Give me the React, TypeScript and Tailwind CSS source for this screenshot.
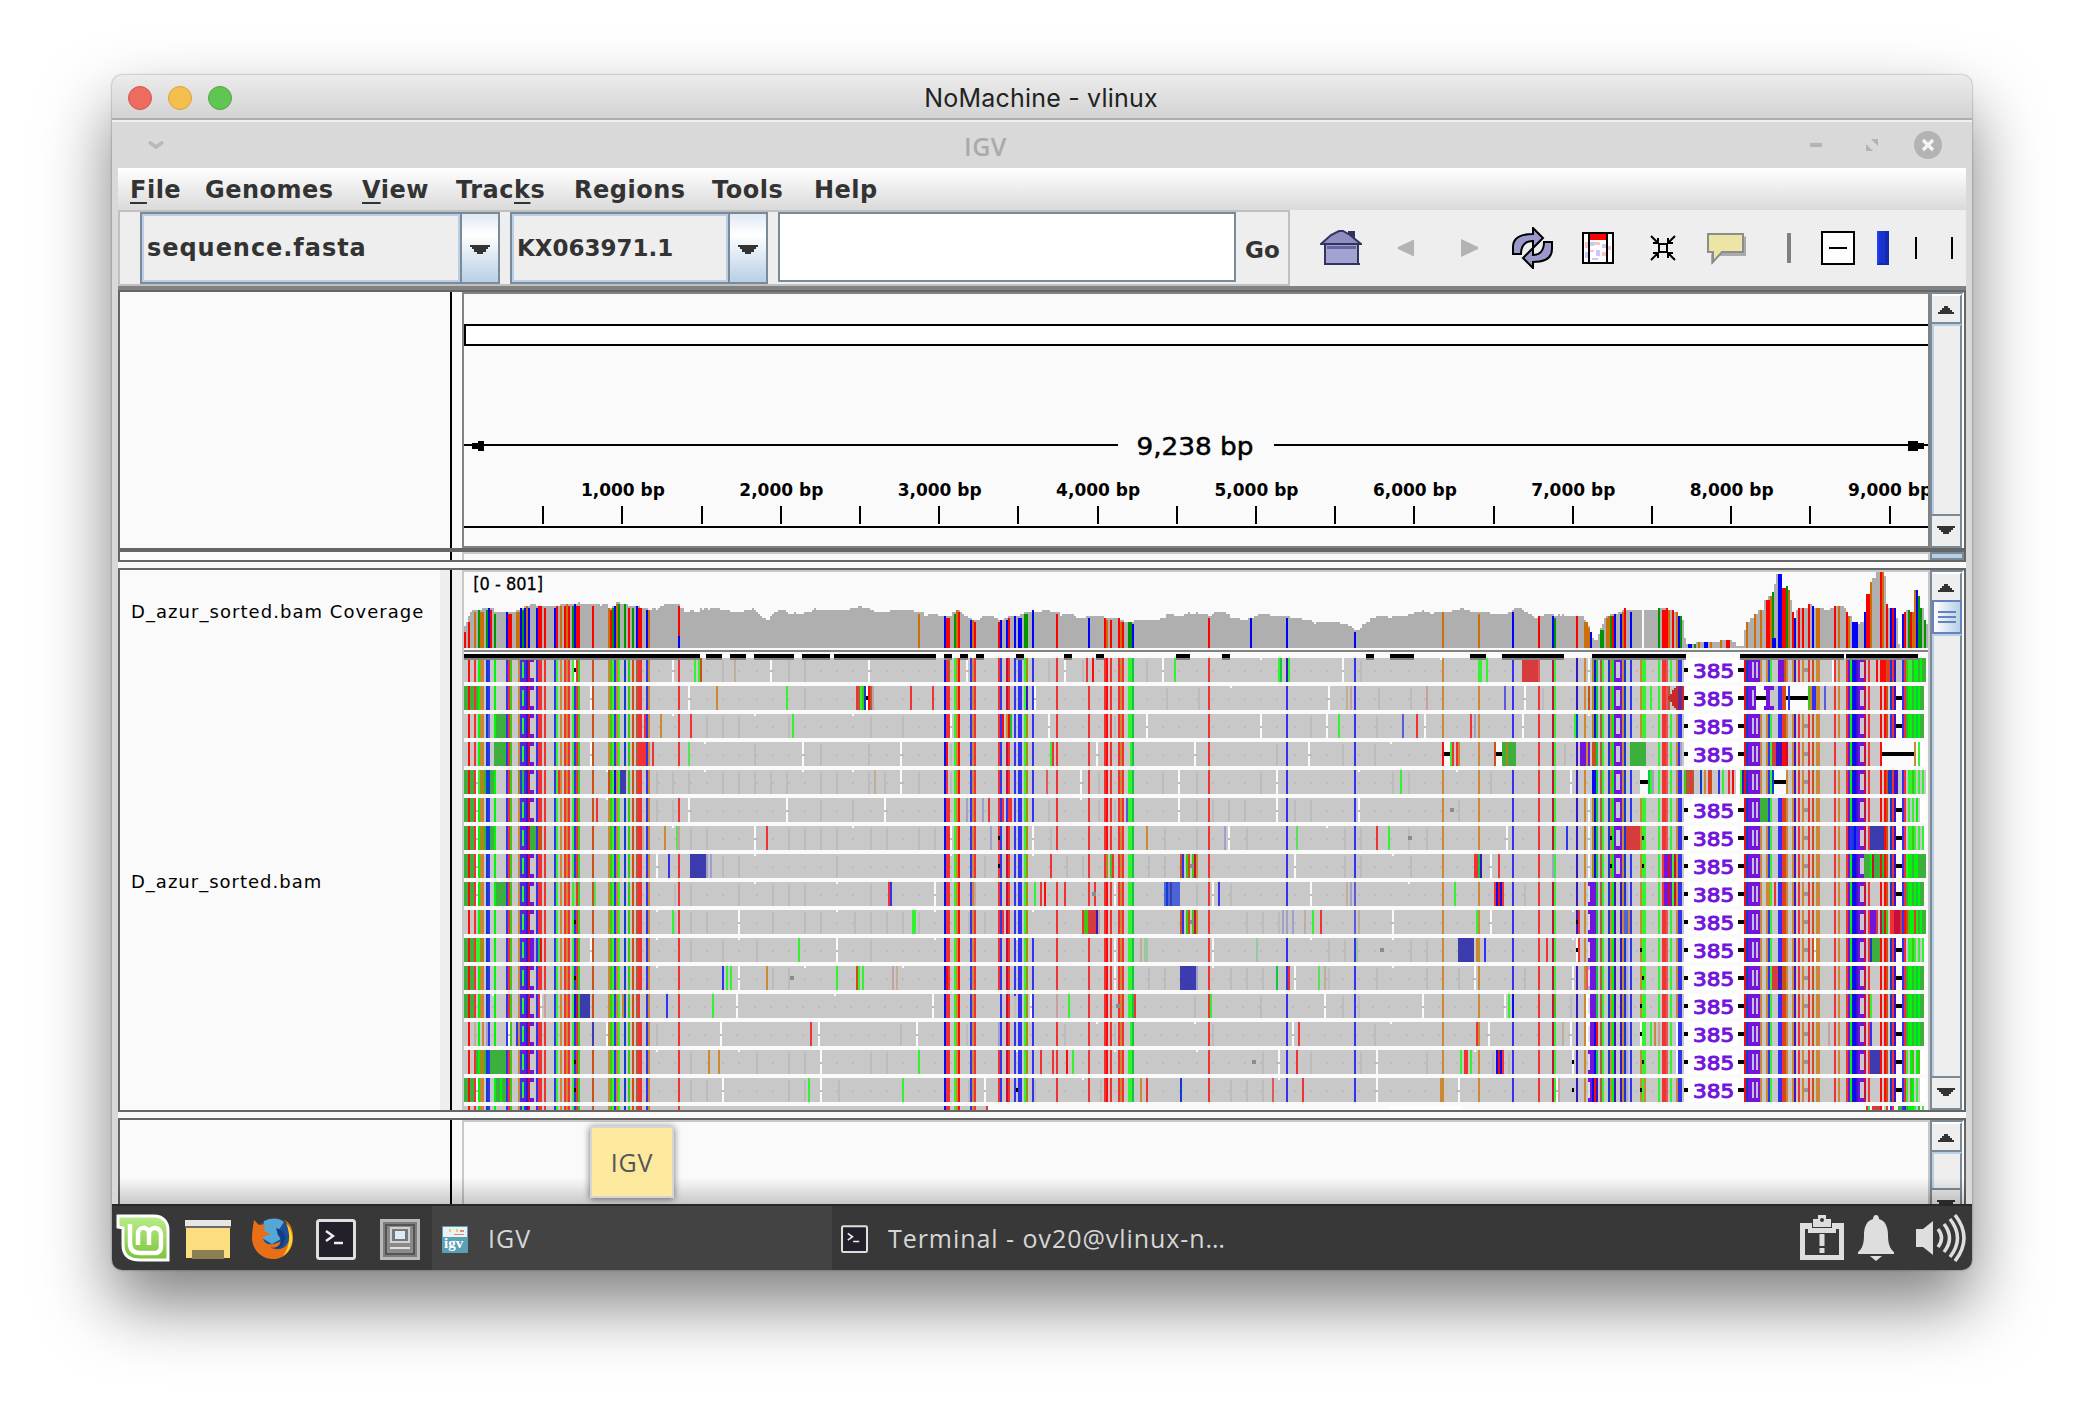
import React from "react";

const COLORS: Record<string, string> = {
  r: "#f23232", b: "#3232f2", g: "#32f232", o: "#cc8833",
  R: "#ff0a0a", B: "#0a0af5", G: "#00f50a", O: "#cc5014",
  k: "#c80f3c", n: "#0f3cd2", e: "#3cc814", f: "#0fc83c",
  y: "#aa8c14", p: "#7314dc", q: "#3c14c8", W: "#ffffff",
  N: "#3c3caf", D: "#d73c3c", E: "#3caf3c", l: "#a0a0c8",
  t: "#beaf9b", h: "#c8a0a0", m: "#b45a3c", c: "#9bc89b",
  a: "#c8c8c8", i: "#5a5adc", j: "#5ae15a", u: "#e15a5a",
  M: "#4b64d7", s: "#b4a5d7",
};

const COMMON_BARS =
  "2R 5r 7G 8o2 11n 12b 15G 21b 22r 23e 27o 28b 29g 30b 31q 32k 36b 37r2 40r 45b 46g 48o 50r 51o 52r 54g 55b 56r 57e 64O " +
  "72o 73e 74g 75b 76o 77g 80n 82e 84O 86m 87r2 91b 92o 107r " +
  "240B 241r2 245g 246o 247R 253b 254o 255r 267r 268b 271k 272r 275b 277b2 280g 281y 284b 296r 312r 320r 321R 323r 327r 328o 329r 332g2 334f 372r 411b 445b " +
  "489o 507o 524b 537r 544k 545g 556q 560o 564y 565B 566f 568m 569g 572n 573o 574G 575q 578q 579o 580n 583b 588o 589g 590g 597g 599r2 601u 603g 606o 607b2 " +
  "640R 641n 642p6 648o 651o 652b 653g 657b2 659r2 660O 661o 664o 665q 667r 669o 672r 674O 676o2 685r 687o 691r 692p 693G 694B2 696q 697p2 700k 702r 708R 710R 711O 713n 714r 715q 719b 720r";

const LATE_READ = "562p3 565p ";
const STRIPES = "721a 722g2 724e 725g 726a 727g 728a 729g";
const BLOCK = "721E 722G2 724E 725G 726f 727G 728E2";

const ROWS: string[] = [
  "55w 55K 104w 115g 117g 118O 129z 135t 153w 162z 170z 202w 242O 251w 292z 300w 309z 311r 312a 314R 341z 349w 355g 398v 407g 408f 411q 412g 439w 448z 488v 507g2 511g 529D8 537u 562w 657p3 684W 706R 709R 712r 721e 722g2 724E 725G2 727E 728G 729E2",
  "0E2 3E2 6E 63w 112w 126o 161g 170z 196r 197m 198g 199e 200n 201w 201K 202R 203m 204h 223r 234r 281q 285w 351z 367z 383v 432w 441t 443h 457z 473z 481h 520i 530w 539z 562O 593g 602m 603D5 606m 646X5 651p2 653a 661X11 662b 672e 673o 674b2 680i 716X3 " + BLOCK,
  "12i 16E5 90r 98o 104v 113r 121z 129z 137z 145v 162z 164g 194v 203z 219z 243w 269R 271o 272R 273f 292w 325z 341w 398w 423z 431w 437g 456z 469i 476r 480w 503r 505l 529w 555g 556n 562v 583b 713b 716X3 " + BLOCK,
  "15E6 89r2 94r 112j 120v 63w 145z 169w 178z 202z 218w 242a 243z 241R 293g 294r 316w 332a 365w 406z 422w 439z 455z 463v 489R 490X3 493g 494r 496r 497o 515O 516X3 519E2 521y 522E4 550z 558p5 561o 564O2 580n 583E6 589E2 608l 654D2 656q3 659R2 661k 687a 708R 709X16 725o 726W 727g 728W3",
  "0E2 3E2 6w 7g 8y2 10E 11n2 13E2 27y 29f 47r 71v 72O 75B 78N3 96z 104z 107a 112z 120v 129z 137z 145z 153z 161z 169v 178z 186z 194v 202z 205t 210z 218w 227z 242a 243z 291u 308w 317z 349z 357w 366z 398z 406w 447v 464z 468g 472z 496v 513z 544k 553w 588X4 592f 593g 594l 564B 610e 611m2 613r 614m 615a3 618n 619a 620o 622r 623O 625a 627b 628a 629g 630a2 632r 634R 635a 636W2 638g 639q 654n 655X6 708R 712n 716q " + STRIPES,
  "0E2 3E2 6w 66r 71v 96z 104z 112w 161w 178z 194z 210w 251l 259l 262r 269r 271b 272r2 292z 308v 317z 325z 331i 357w 366z 374z 382z 390z 406w 415z 423z 447w 493x 497z 562w 648E4 716X3 721a 722g 723a 724g 725a 726G 727a 728W3",
  "0E2 3E2 6w 8y2 10E 11n2 13E2 33E3 37O2 89t 100o 104v 106j 107h 113z 121z 145w 151r 162z 170z 178z 186z 194v 203z 211z 227z 235z 243w 263l 267K 284w 293z 341o 350z 366z 380l 382w 391z 416j 431v 440z 448z 456r 462g 472z 472x 481z 521w 551b 562w 581D7 573K 589K 692q 693b 694n 696b 703N5 708N2 716X3 " + STRIPES,
  "0E2 3E2 6w 96w 102b 113N8 121l 123l 129z 137z 145v 186z 243v 260z 267K 284a 284v 293r 296a 301z 309z 321y 323e 324r 342z 350z 358O 359b 361e 362O 364e 365k 366o 363x 415w 440z 448z 464v 473z 505r2 507f 508q 513w 517r 544l 562w 573K 589K 600p2 602k 603p 604g 605k 700E3 703G 704k 705E3 708R 709f 716X3 721g 722G2 724E 725G2 727E4",
  "0E2 3E2 6w 16E5 55c 65j 105z 113z 137z 145v 154z 162z 170z 186v 203z 212r 213b 235w 255h 284a 285g 288r 290R 300r 315r 314x 325w 350M8 351n 353N 366z 374w 377b 383z 423w 441t 443l 445i 472v 495g 515r 516B 517R 518B 519r 530z 600p2 602k 603p 604g 605k 652o 655r 716X3 " + LATE_READ + BLOCK,
  "55K 96v 104g 105z 113z 121z 137w 154z 170z 178z 186v 195z 203z 211z 219z 224g2 227z 235v 252z 260z 269r 284a 284v 309r 310e2 312D4 316q 317h 358O 359b 361e 362O 364e 365k 366o 363x 391z 399z 407z 409l 411l 414l 420t 424g 428r 445i 447t 464w 506g 513w 554v 556K 557r 580M2 582o 703p3 706D 708k 709f 711e 713r 715k 716k2 718D 720R 721O 722e 723G2 725r 726G 727E 728G 729E2 " + LATE_READ,
  "0E2 3E2 6g 7g 8y2 33p3 35s 37f 38R 63w 96v 113z 129z 137v 146z 167g 186w 203z 235v 276v 325w 338t 340c2 374w 396c 423v 432z 440z 446c 458x 464v 473z 481z 497N8 506o2 510b 541r 554v 556w 556K 557r 588K 675w 703n 704E4 716X3 " + LATE_READ + STRIPES,
  "0E2 3E2 55K 96v 129b 131g 133g 137w 151o 154z 162z 163x 170v 186g 196O 197g 199g 214h 216t 219v 241R 284b 325w 342z 350z 358N8 366l 374v 383z 391z 399z 406f 412r 415w 427j 430t 432z 456z 464v 481z 497z 505w 530z 554w 561u 654D3 657q2 659O 716X3 589K 562s 563p2 565p " + BLOCK,
  "0E2 3E2 14v 37r 38w 40h 55B 56k 58N5 79o 88a 101b 124g 136w 185v 234w 267a 275z 283w 296h 302g 326x 335r 365z 373g 398z 430w 439z 447z 479w 520w 522g 524B 545e 553z 561W2 563p3 588K 703g 716X3 " + BLOCK,
  "5t 8a 11l 22w 26b 64N 71w 96z 128w 173r 177w 218z 226w 251z 267l 300z 316v 325z 332a 365v 374z 414w 417r 455z 463v 506r 512w 549t 553w 561W2 563p2 565B 566R 588w 588K 591a 593g 595o 597h 606W 682h 703b 716X3 " + BLOCK,
  "6E 8y2 10E 13E8 55K 96v 113z 122o 127o 137v 146z 162z 170z 178w 203z 211z 227g 276v 288r 294r 301R 304g 325v 366v 394x 399z 407w 416r 423z 448z 456w 481z 498g 500r2 503g 505v 514z 516B 517R 518B 519r 522z 554w 554K 562p3 589K 606W 703N5 716X3 721g 722a 723G 724e 725a 726G 727e 728W3",
  "0E2 3E2 6w 16E5 18G 55K 113z 121z 129w 162z 170z 172g 178w 187z 219g 252z 260w 276K 285z 309v 318z 338o 341r 358n 383z 391z 399z 404u 407v 419r 456w 488o2 497w 546w 547h 554K 562p2 564B 565R 566q 588K 590o 716X3 721g 722a 723e 724G 725a 726g 727a 728W3",
];

const COVERAGE: number[][] = [
  [0,11],[1,13],[2,16],[3,18],[4,19],[9,20],[13,20],[15,18],[21,18],[26,19],[28,20],[30,21],[33,22],[36,21],[44,21],[48,22],[57,23],[58,22],[68,21],[69,22],[72,20],[74,21],[76,23],[78,22],[82,21],[86,21],[88,20],[92,19],[94,20],[96,19],[97,20],[98,21],[100,22],[108,20],[110,18],[113,19],[115,18],[118,20],[119,19],[120,20],[122,19],[123,20],[128,19],[133,18],[140,19],[144,20],[145,19],[146,18],[147,17],[148,16],[149,15],[151,14],[153,16],[154,17],[155,18],[157,19],[161,18],[162,17],[165,18],[166,17],[170,18],[174,19],[175,20],[176,19],[193,20],[197,21],[199,20],[203,19],[205,18],[213,19],[225,18],[228,18],[230,16],[232,17],[237,16],[244,18],[246,19],[248,18],[249,17],[250,16],[252,15],[254,14],[258,15],[259,16],[265,15],[267,14],[270,15],[272,16],[278,17],[280,18],[284,19],[285,18],[289,19],[293,18],[298,16],[299,17],[303,17],[305,16],[306,15],[311,16],[319,16],[320,15],[324,15],[328,14],[330,13],[335,14],[345,14],[348,15],[351,17],[355,16],[360,17],[362,18],[363,17],[366,18],[367,17],[368,17],[372,16],[374,17],[375,18],[381,17],[383,15],[388,14],[392,15],[395,16],[397,17],[403,16],[409,16],[413,15],[419,14],[424,13],[425,12],[426,13],[435,13],[438,12],[442,11],[444,10],[445,9],[448,10],[449,12],[451,13],[453,15],[456,16],[462,15],[464,16],[468,16],[472,17],[475,18],[479,19],[480,18],[483,17],[485,18],[492,18],[494,19],[498,20],[500,19],[503,18],[513,17],[520,17],[522,18],[524,19],[525,20],[529,19],[530,18],[532,17],[534,16],[535,15],[537,16],[540,17],[545,16],[547,17],[548,16],[549,17],[550,16],[558,16],[560,14],[561,11],[563,8],[564,5],[565,4],[567,7],[568,10],[569,12],[570,15],[571,16],[573,17],[577,18],[579,19],[580,20],[581,19],[584,19],[587,19],[597,20],[602,19],[605,18],[607,16],[609,14],[610,5],[611,2],[616,3],[628,4],[634,3],[636,1],[640,9],[641,13],[643,15],[645,17],[647,19],[649,19],[650,24],[652,26],[654,28],[655,32],[656,37],[658,36],[659,30],[661,31],[662,29],[663,24],[664,18],[665,15],[666,19],[667,20],[672,22],[674,21],[675,20],[680,19],[683,20],[685,21],[690,20],[691,18],[692,16],[694,13],[697,12],[698,13],[700,18],[701,27],[703,33],[704,35],[706,38],[710,36],[711,22],[712,20],[715,20],[716,15],[717,2],[718,0],[719,17],[720,18],[721,19],[723,18],[725,29],[727,26],[728,20],[730,14],[731,12],[732,0],
];

const COVERAGE_BARS =
  "0r 2r 5o 7G 8o2 11G 12b 13r 15G 21b 22r2 26o2 28b 29G 30b 31o 32b 36b 37r2 40r 45b 46r 48o 50r 51o 52r 54G 55b 56r2 64r 72o 73r 74G 75b 76o 77G 80G 82r 84G 86b 87r2 91b 92o 107r 227o " +
  "240b 241r2 245G 246o 247r 253b 254o 255r 267r 268b 271b 272r 275b 277b2 280G2 284b 296r 312b 320r 321o 323r 327r 328o 329r 332G2 334b 372r 393b 411b 445b " +
  "489o 507o 524b 537r 544b 545G 556r 560o2 562o 563b 568G2 571o 572o 573G 574r 575b 578b 579o 580r 583b 589w 597G 599r2 601r 602o 604r 606o 607b 608G 612b2 615G 617o 620b2 623o 628o 631r2 " +
  "641o 645o 648o 651r2 653o 654G 657b2 659r2 661G 662o 664r 665b 667r 669r 672r 674b 676o2 685r 687o 691r 692o 694b2 696b 700b 701r 702r 703o 708r 709o 711r 713b 714r 715b 719b 720r 722G 723r 724o 725o 726b 727G 728G 730G";

const COVERAGE_COLORS: Record<string, string> = { r: "#ff0000", b: "#0000ff", G: "#009600", o: "#cc6e0a", w: "#fafafa" };

const FEATURES: number[][] = [
  [0,118],[121,8],[133,8],[145,20],[169,14],[185,51],[240,4],[248,4],[256,4],[276,4],[300,4],[316,4],[356,7],[379,4],[451,4],[463,12],[503,8],[519,31],[564,47],[638,52],[691,36],
];

type Bar = { at: number; kind: string; len: number };

function parse(spec: string): Bar[] {
  return [...spec.matchAll(/(\d+)([a-zA-Z])(\d*)/g)].map((m) => ({
    at: Number(m[1]), kind: m[2], len: m[3] ? Number(m[3]) : 1,
  }));
}

function BarMark({ bar, y }: { bar: Bar; y: number }) {
  const { at, kind, len } = bar;
  if (kind === "z") return <rect x={at} y={y + 1} width={1} height={11} fill="#bcbcbc" />;
  if (kind === "v") return <rect x={at} y={y} width={1} height={1} fill="#fafafa" />;
  if (kind === "K") return <rect x={at} y={y + 5} width={1} height={2} fill="#000" />;
  if (kind === "x") return <rect x={at} y={y + 5} width={2} height={2} fill="#8c8c8c" />;
  if (kind === "w")
    return (
      <>
        <rect x={at} y={y} width={1} height={12} fill="#fafafa" />
        <rect x={at} y={y + 6} width={1} height={1} fill="#bcbcbc" />
      </>
    );
  if (kind === "X")
    return (
      <>
        <rect x={at} y={y} width={len} height={12} fill="#fafafa" />
        <rect x={at} y={y + 5} width={len} height={2} fill="#000" />
      </>
    );
  return <rect x={at} y={y} width={len} height={12} fill={COLORS[kind]} />;
}

const COMMON = parse(COMMON_BARS);

function ReadRow({ spec, index }: { spec: string; index: number }) {
  const y = 43 + index * 14;
  const dots = Array.from({ length: 75 }, (_, k) => Math.round(7 + k * 8.15 - (index > 11 && index < 14 ? 1 : 0)));
  const spliced = index !== 4;
  const upper = index < 8;
  return (
    <g>
      <rect x={0} y={y} width={spliced ? 610 : 730} height={12} fill="#c8c8c8" />
      <rect x={640} y={y} width={[0, 4, 7, 9].includes(index) ? 91 : 90} height={12} fill="#c8c8c8" />
      {dots.map((d) => d < 608 && <rect key={d} x={d} y={y + 6} width={1} height={1} fill="#bcbcbc" />)}
      {COMMON.map((b, i) => <BarMark key={i} bar={b} y={y} />)}
      {[29, 33].map((x) => (
        <React.Fragment key={x}>
          <rect x={x} y={y} width={2} height={2} fill={COLORS.p} />
          <rect x={x} y={y + 10} width={2} height={2} fill={COLORS.p} />
        </React.Fragment>
      ))}
      {upper && (
        <>
          <rect x={575} y={y} width={4} height={12} fill={COLORS.p} />
          <rect x={576} y={y + 2} width={2} height={8} fill="#c8c8dc" />
        </>
      )}
      {!upper && <rect x={581} y={y} width={1} height={12} fill={COLORS.s} />}
      <rect x={644} y={y + 2} width={1} height={8} fill="#c8bedc" />
      <rect x={646} y={y + 2} width={1} height={8} fill="#c8bedc" />
      <rect x={697} y={y} width={3} height={12} fill={COLORS.p} />
      <rect x={698} y={y + 2} width={2} height={8} fill="#c8c8d2" />
      <rect x={670} y={y + 5} width={2} height={2} fill="#969696" />
      {parse(spec).map((b, i) => <BarMark key={i} bar={b} y={y} />)}
      {index === 1 && (
        <>
          <rect x={603} y={y} width={4} height={12} fill="#c8c8c8" />
          <path d={`M601 ${y + 6}h1v-1h1v-1h1v-2h1v-1h1v-1h4v12h-4v-1h-1v-1h-1v-2h-1v-1h-1v-1z`} fill="#c82a28" />
          <rect x={607} y={y} width={2} height={12} fill="#6a2890" />
          <rect x={650} y={y} width={5} height={2} fill={COLORS.p} />
          <rect x={650} y={y + 10} width={5} height={2} fill={COLORS.p} />
        </>
      )}
      {!upper && <rect x={562} y={y + 2} width={1} height={8} fill="#e1dcf0" />}
      {spliced && (
        <>
          <rect x={610} y={y + 5} width={2} height={2} fill="#000" />
          <rect x={612} y={y} width={25} height={12} fill="#fff" />
          <rect x={637} y={y + 5} width={3} height={2} fill="#000" />
          <text x={614.5} y={y + 9.8} fontSize={9.6} fontWeight={400} stroke={COLORS.p} strokeWidth={0.5} textLength={20.6} lengthAdjust="spacingAndGlyphs" fill={COLORS.p}>385</text>
        </>
      )}
    </g>
  );
}

function coverageAt(c: number) {
  let h = 0;
  for (const [x, v] of COVERAGE) if (x <= c) h = v;
  return h;
}

function AlignmentChart() {
  let path = "M0 38";
  COVERAGE.forEach(([x, h]) => { path += `H${x}V${38 - h}`; });
  return (
    <svg className="block" width={1464} height={538} viewBox="0 0 732 269" shapeRendering="crispEdges" fontFamily="'DejaVu Sans'">
      <rect width={732} height={269} fill="#fafafa" />
      <path d={path + "V38Z"} fill="#afafaf" />
      {parse(COVERAGE_BARS).map((b, i) => {
        const h = b.at === 0 ? 8 : b.at === 2 ? 13 : Math.max(1, coverageAt(b.at) - (b.kind === "w" || b.at > 600 || i % 3 === 0 ? 0 : 1));
        return <rect key={i} x={b.at} y={38 - h} width={b.len} height={h} fill={COVERAGE_COLORS[b.kind]} />;
      })}
      <rect x={107} y={32} width={1} height={6} fill="#00f" />
      <rect x={654} y={33} width={2} height={5} fill="#00f" />
      <text x={4.6} y={9} fontSize={8.6} stroke="#000" strokeWidth={0.15} textLength={35} lengthAdjust="spacingAndGlyphs">[0 - 801]</text>
      <rect x={0} y={39} width={732} height={1} fill="#828282" />
      {ROWS.map((spec, i) => <ReadRow key={i} spec={spec} index={i} />)}
      {FEATURES.map(([x, w]) => (
        <React.Fragment key={x}>
          <rect x={x} y={41} width={w} height={2} fill="#000" />
          <rect x={x} y={43} width={w} height={1} fill="#828282" />
        </React.Fragment>
      ))}
      <rect x={0} y={267} width={262} height={2} fill="#c8c8c8" />
      {COMMON.filter((b) => b.at < 262).map((b, i) => (
        <rect key={i} x={b.at} y={267} width={b.len} height={2} fill={COLORS[b.kind]} />
      ))}
      <rect x={261} y={267} width={1} height={2} fill={COLORS.D} />
      <rect x={463} y={267} width={36} height={2} fill="#fff" />
      {parse("701r 702g 704D5 708R 710a 711O 713b 714r 717E2 719b 720n 721E 722G3 725g 726a 727E 729g").map((b, i) => (
        <rect key={i} x={b.at} y={267} width={b.len} height={2} fill={COLORS[b.kind]} />
      ))}
    </svg>
  );
}

function Ruler() {
  return (
    <svg className="block" width={1464} height={252} viewBox="0 0 1464 252" fontFamily="'DejaVu Sans'" shapeRendering="crispEdges">
      <rect width={1464} height={252} fill="#fafafa" />
      <path d="M1466 31H1V51H1466" fill="#fff" stroke="#000" strokeWidth={2} />
      <path d="M0 150h654v2H0zM810 150h654v2H810z" />
      <path d="M8 149h6v-2h6v10h-6v-2H8zM1460 149h-6v-2h-10v10h10v-2h6z" />
      <text x={731} y={161} fontSize={24} textAnchor="middle" textLength={117} lengthAdjust="spacingAndGlyphs" stroke="#000" strokeWidth={0.5}>9,238 bp</text>
      {Array.from({ length: 18 }, (_, i) => (
        <rect key={i} x={Math.round((i + 1) * 79.2 - 1)} y={212} width={2} height={18} />
      ))}
      {Array.from({ length: 9 }, (_, i) => (
        <text key={i} x={(i + 1) * 158.4 + 0.5} y={201.5} fontSize={18.5} fontWeight={700} textAnchor="middle" textLength={84} lengthAdjust="spacingAndGlyphs">{i + 1},000 bp</text>
      ))}
      <rect x={0} y={232} width={1464} height={2} />
    </svg>
  );
}

function Arrow({ up = false, wide = 18 }: { up?: boolean; wide?: number }) {
  return (
    <svg width={wide} height={wide / 2} viewBox="0 0 18 9" shapeRendering="crispEdges">
      <path d={up ? "M7 1h4v2h2v2h2v2h2v2H1V7h2V5h2V3h2z" : "M0 0h18v2h-2v2h-2v2h-2v2H6V6H4V4H2V2H0z"} fill="#333" />
    </svg>
  );
}

function ScrollBar({ thumb = false }: { thumb?: boolean }) {
  return (
    <div className="flex w-[34px] shrink-0 flex-col border-x-2 border-t-2 border-l-[#7a8a99] border-r-white border-t-[#7a8a99] bg-[#eeeeee]">
      <div className="flex h-[30px] shrink-0 items-center justify-center border-r-2 border-b-2 border-t-2 border-t-white border-b-[#7a8a99] border-r-[#7a8a99]">
        <Arrow up />
      </div>
      {thumb && (
        <div className="-mt-0.5 flex h-[34px] shrink-0 flex-col items-center justify-center gap-[3px] border-2 border-[#6382bf] bg-gradient-to-r from-white to-[#b8cfe5]">
          <div className="h-0.5 w-[18px] bg-[#6382bf]" />
          <div className="h-0.5 w-[18px] bg-[#6382bf]" />
          <div className="h-0.5 w-[18px] bg-[#6382bf]" />
        </div>
      )}
      <div className="min-h-0 flex-1 border-t-2 border-l-2 border-r-2 border-t-[#b8cfe5] border-l-[#b8cfe5] border-r-[#7a8a99]" />
      <div className="flex h-[34px] shrink-0 items-center justify-center border-y-2 border-r-2 border-[#7a8a99] pb-0.5">
        <Arrow />
      </div>
    </div>
  );
}

function PanelRow({ className, name, children, bar, gutter = false, edge }: {
  className: string; name?: React.ReactNode; children?: React.ReactNode; bar?: React.ReactNode; gutter?: boolean; edge: string;
}) {
  return (
    <div className={"flex border-x-2 border-[#666666] bg-[#fafafa] " + className}>
      <div className="flex w-[330px] shrink-0">
        <div className="w-[320px]">{name}</div>
        <div className={gutter ? "w-[10px] bg-[#eeeeee]" : "w-[10px]"} />
      </div>
      <div className="w-0.5 shrink-0 bg-black" />
      <div className={gutter ? "w-[10px] shrink-0 bg-[#f0f0f0]" : "w-[10px] shrink-0"} />
      <div className={"w-[1468px] shrink-0 overflow-hidden border-x-2 border-t-2 " + edge}>{children}</div>
      {bar}
    </div>
  );
}

function Combo({ text, className }: { text: string; className: string }) {
  return (
    <div className={"flex h-[72px] border-2 border-[#7a8a99] font-bold text-[#333] " + className}>
      <div className="flex flex-1 items-center border-2 border-[#b8cfe5] pl-[3px]">{text}</div>
      <div className="flex w-[38px] items-center justify-center border-l-2 border-[#7a8a99] bg-gradient-to-b from-[#dfe9f4] via-white via-30% to-[#b8cfe5] pt-1">
        <Arrow wide={20} />
      </div>
    </div>
  );
}

function ToolIcons() {
  return (
    <div className="flex h-[76px] flex-1 items-center bg-[#eeeeee]">
      <svg className="ml-[30px]" width={42} height={36} viewBox="0 0 42 36">
        <path d="M5 14V34H38V14" fill="#a3a3d1" stroke="#33335f" strokeWidth={2} />
        <path d="M28 1h7v10h-7z" fill="#33335f" />
        <path d="M1 14L11 5 19 1h4l7 4 11 9z" fill="#8e8ec0" stroke="#33335f" strokeWidth={2} />
        <path d="M7 16h29v3H7z" fill="#6666a0" /><path d="M4 34h36" stroke="#33335f" strokeWidth={2} />
      </svg>
      <svg className="ml-[36px]" width={16} height={18} viewBox="0 0 17 18"><path d="M17 0v18L0 10V8z" fill="#b3b3b3" /></svg>
      <svg className="ml-[47px]" width={17} height={18} viewBox="0 0 17 18"><path d="M0 0v18l17-8V8z" fill="#b3b3b3" /></svg>
      <svg className="ml-[33px]" width={43} height={42} viewBox="0 0 43 42">
        <path d="M2 27V20C2 11 9 7 22 7V1L32 11 22 21V14C14 14 10 19 10 27z" fill="#9999cc" stroke="#000" strokeWidth={2} />
        <path d="M41 15V22C41 31 34 35 22 35V41L12 31 22 21V28C29 28 33 23 33 15z" fill="#9999cc" stroke="#000" strokeWidth={2} />
      </svg>
      <svg className="ml-[28px]" width={32} height={32} viewBox="0 0 32 32" shapeRendering="crispEdges">
        <rect x={1} y={1} width={30} height={30} fill="#fff" stroke="#000" strokeWidth={2} />
        <path d="M8 2h16v6H8z" fill="#f00" />
        <path d="M8 10h4v4H8zM14 18h4v6h-4zM20 12h4v4h-4zM10 26h6v2h-6zM3 20h3v6H3z" fill="#c8c8ff" />
        <path d="M12 10h6v3h-6zM20 20h4v4h-4zM8 18h4v2H8zM3 10h3v6H3zM26 14h3v4h-3z" fill="#ffc0c0" />
        <path d="M7 1v30M25 1v30" stroke="#000" strokeWidth={2} />
      </svg>
      <svg className="ml-[36px]" width={26} height={26} viewBox="0 0 26 26">
        <path d="M9 9h8v8H9zM1 1l7 7M8 3v5H3M25 1l-7 7M18 3v5h5M1 25l7-7M3 18h5v5M25 25l-7-7M23 18h-5v5" fill="none" stroke="#000" strokeWidth={2} />
      </svg>
      <svg className="ml-[31px]" width={39} height={33} viewBox="0 0 39 33">
        <path d="M4 22v11l8-9h27V4" fill="#aaa" /><path d="M1 2h35v18H15L6 30V20H1z" fill="#ece5a6" stroke="#8c8c8c" strokeWidth={2} />
      </svg>
      <div className="ml-[41px] h-[30px] w-1 bg-[#808080]" />
      <div className="ml-[30px] flex h-[34px] w-[34px] items-center justify-center border-2 border-black bg-white"><div className="h-0.5 w-[18px] bg-black" /></div>
      <div className="ml-[22px] h-[34px] w-3 border-r-4 border-l-2 border-b-2 border-l-[#2040ff] border-r-[#1428b4] border-b-[#1428a0] bg-[#1a32cc]" />
      <div className="ml-[26px] h-[22px] w-0.5 bg-black" />
      <div className="ml-[34px] h-[22px] w-0.5 bg-black" />
    </div>
  );
}

function TerminalIcon({ w, h }: { w: number; h: number }) {
  return (
    <svg width={w} height={h} viewBox="0 0 40 42">
      <rect x={1.5} y={1.5} width={37} height={38} rx={2} fill="#231f2b" stroke="#dedede" strokeWidth={3} />
      <path d="M10 12l7 5-7 5M18 24h9" fill="none" stroke="#eee" strokeWidth={2.4} />
    </svg>
  );
}

function Taskbar() {
  return (
    <div className="flex h-[66px] items-center border-t-2 border-[#26282b] bg-[#383838] text-[25px] text-[#d6d6d6]">
      <svg className="ml-1 shrink-0" width={54} height={48} viewBox="0 0 54 48">
        <defs><linearGradient id="mint" x1="0" y1="0" x2="0" y2="1"><stop offset="0" stopColor="#b9ee8b" /><stop offset="1" stopColor="#7cc23a" /></linearGradient></defs>
        <path d="M2 2H38C47 2 52 8 52 16V46H24C13 46 7 41 7 31V14L2 13z" fill="url(#mint)" stroke="#fff" strokeWidth={3} />
        <path d="M14 10V29C14 36 18 39 24 39H39C43 39 45 36 45 32V21C45 12 34 12 33 19 32 12 22 12 22 20V31M33 18V31" fill="none" stroke="#fff" strokeWidth={4.5} />
      </svg>
      <svg className="mt-1 ml-[14px] shrink-0" width={48} height={42} viewBox="0 0 48 42">
        <path d="M1 1h46v8H1z" fill="#e6e6e6" /><path d="M1 7h46v2H1z" fill="#6a6a6a" /><path d="M2 9h44v30H2z" fill="#fcdd80" /><path d="M8 31h32v9H8z" fill="#8d8050" />
      </svg>
      <svg className="mt-0.5 ml-[20px] shrink-0" width={42} height={42} viewBox="0 0 42 42">
        <circle cx={21} cy={21} r={20} fill="#1b4f96" />
        <path d="M12 3c8-4 16-3 20 1l-6 9 3 8-9 5-10-6z" fill="#54a8d6" />
        <path d="M2 2l5 5 6-1-1 7 7 3-8 3c0 7 7 9 14 6l8-3c-2 7-10 9-15 7 10 6 20-1 20-12 0-7-2-11-6-15 6 2 9 9 9 17C41 33 32 41 21 41S0 32 0 20C0 13 1 9 2 2z" fill="#e96f17" />
        <path d="M34 5c9 9 9 25-3 33 7-9 8-22 3-33z" fill="#ffd52a" />
        <path d="M24 10c8 2 11 8 8 15-2 4-6 6-10 5 8-2 8-9 4-13z" fill="#123c86" />
      </svg>
      <span className="mt-1 ml-[22px] shrink-0"><TerminalIcon w={40} h={42} /></span>
      <svg className="mt-1 ml-[24px] shrink-0" width={40} height={42} viewBox="0 0 40 42">
        <rect x={1.5} y={1.5} width={37} height={38} fill="#7d7d7d" stroke="#b9b9b9" strokeWidth={3} />
        <rect x={6} y={6} width={28} height={29} fill="#8a8a8a" stroke="#555" strokeWidth={2} />
        <rect x={11} y={9} width={18} height={14} fill="#777" stroke="#d0d0d0" strokeWidth={2} />
        <rect x={15} y={12} width={10} height={8} fill="#dfe9f6" /><path d="M10 29h20" stroke="#e0e0e0" strokeWidth={2} />
      </svg>
      <div className="ml-3 flex h-full w-[400px] shrink-0 items-center bg-[#434343] pt-0.5 pl-[10px] font-['Open_Sans']">
        <svg width={26} height={27} viewBox="0 0 26 27">
          <rect width={26} height={27} rx={1} fill="#5aa0b4" /><path d="M1 1h24v10H1z" fill="#e9f1f2" />
          <path d="M7 3h2v3H7zM14 3h2v3h-2z" fill="#e8cf6a" /><path d="M18 4h4v2h-4zM12 8h10v1H12z" fill="#e58a6a" />
          <text x={2} y={22} fontSize={15} fontFamily="Liberation Serif" fill="#fff" fontWeight={700}>igv</text>
        </svg>
        <span className="ml-[20px] tracking-[1px]">IGV</span>
      </div>
      <div className="flex w-[968px] shrink-0 items-center pt-0.5 pl-[9px] font-['Open_Sans']">
        <TerminalIcon w={27} h={29} />
        <span className="ml-[20px] tracking-[0.95px]">Terminal - ov20@vlinux-n…</span>
      </div>
      <svg className="shrink-0" width={44} height={46} viewBox="0 0 44 46" fill="#dedede">
        <path d="M0 8h12v5h20V8h12v37H0zM5 14v26h34V14h-3v4H8v-4z" fillRule="evenodd" />
        <path d="M13 4h5V0h8v4h5v8H13z" /><circle cx={22} cy={5} r={2} fill="#383838" /><path d="M19.500 19h5v12h-5zM19.500 33h5v5h-5z" />
      </svg>
      <svg className="ml-[14px] shrink-0" width={36} height={46} viewBox="0 0 36 46" fill="#dedede">
        <path d="M18 0c2 0 3 2 3 4 7 2 9 9 9 16 0 9 2 14 6 17v2H0v-2c4-3 6-8 6-17 0-7 2-14 9-16 0-2 1-4 3-4zM12 41h12l-6 5z" />
      </svg>
      <svg className="ml-[22px] shrink-0" width={50} height={48} viewBox="0 0 50 48">
        <path d="M0 15h7l10-8v34L7 33H0z" fill="#dedede" />
        <path d="M22 15q7 9 0 18M28 10q11 14 0 28M34 5q15 19 0 38M39 1q18 23 0 46" fill="none" stroke="#dedede" strokeWidth={3.5} />
      </svg>
    </div>
  );
}

export default function App() {
  return (
    <div className="h-[1418px] w-[2084px] overflow-hidden bg-white px-[112px] pt-[75px] font-['DejaVu_Sans',sans-serif]">
      <div className="flex h-[1195px] w-[1860px] flex-col overflow-hidden rounded-[10px] bg-[#d9d9d9] shadow-[0_0_2px_rgba(0,0,0,0.5),0_34px_68px_rgba(0,0,0,0.5)]">
        <header className="relative flex h-[45px] shrink-0 items-center justify-center border-b-2 border-[#adadad] bg-gradient-to-b from-[#ececec] to-[#d3d3d3]">
          <div className="absolute top-[11px] left-4 flex gap-4">
            <div className="size-6 rounded-full border border-[#d5574c] bg-[#ed6b5f]" />
            <div className="size-6 rounded-full border border-[#d9a13e] bg-[#f5bf4f]" />
            <div className="size-6 rounded-full border border-[#51a73f] bg-[#61c554]" />
          </div>
          <span className="pt-[5px] pr-[2px] font-['Inter'] text-[25px] tracking-[0.2px] text-[#222]">NoMachine - vlinux</span>
        </header>
        <div className="relative flex h-[48px] shrink-0 items-center border-t-2 border-[#f0f0f0] pr-[30px] pl-[36px]">
          <svg width={16} height={9} viewBox="0 0 16 9"><path d="M1 1l7 5 7-5" fill="none" stroke="#b8b8b8" strokeWidth={3.5} /></svg>
          <span className="ml-[800px] pt-1 font-['Open_Sans'] text-[25px] font-semibold tracking-[0.5px] text-[#aaa]">IGV</span>
          <div className="ml-auto h-1 w-3 bg-[#b3b3b3]" />
          <svg className="ml-[44px]" width={12} height={12} viewBox="0 0 12 12"><path d="M5 0h7v7zM0 5v7h7z" fill="#b3b3b3" /></svg>
          <div className="ml-[36px] flex size-7 items-center justify-center rounded-full bg-[#b3b3b3]">
            <svg width={12} height={12} viewBox="0 0 12 12"><path d="M1 1l10 10M11 1L1 11" stroke="#f4f4f4" strokeWidth={3.5} /></svg>
          </div>
        </div>
        <div className="mx-1.5 flex min-h-0 flex-1 flex-col">
          <nav className="flex h-[42px] shrink-0 items-center bg-gradient-to-b from-white to-[#dadada] pt-0.5 pl-[12px] text-[24px] font-bold tracking-[0.5px] text-[#333]">
            <span className="w-[75px]"><u className="underline-offset-4">F</u>ile</span>
            <span className="w-[157px]">Genomes</span>
            <span className="w-[94px]"><u className="underline-offset-4">V</u>iew</span>
            <span className="w-[118px]">Trac<u className="underline-offset-4">k</u>s</span>
            <span className="w-[138px]">Regions</span>
            <span className="w-[102px]">Tools</span>
            <span>Help</span>
          </nav>
          <div className="flex h-[76px] shrink-0 bg-[#eeeeee]">
            <div className="flex w-[1172px] shrink-0 border-2 border-[#c0c0c0]">
              <Combo text="sequence.fasta" className="ml-[20px] w-[360px] text-[24px] tracking-[0.95px]" />
              <Combo text="KX063971.1" className="ml-[10px] w-[258px] text-[23px]" />
              <div className="ml-[10px] h-[70px] w-[458px] border-2 border-[#7a8a99] bg-white" />
              <span className="ml-[9px] self-center pt-1 text-[23px] font-bold text-[#333]">Go</span>
            </div>
            <ToolIcons />
          </div>
          <div className="h-1 shrink-0 bg-[#828282]" />
          <div className="h-0.5 shrink-0 bg-[#666666]" />
          <PanelRow className="h-[256px] shrink-0" edge="border-b-2 border-[#828282]" bar={<ScrollBar />}>
            <Ruler />
          </PanelRow>
          <div className="h-1 shrink-0 bg-[#666666]" />
          <PanelRow className="h-2 shrink-0" edge="border-[#c8c8c8]" bar={<div className="w-[34px] shrink-0 border-2 border-[#7a8a99] bg-[#b8cfe5]" />} />
          <div className="h-[10px] shrink-0 border-y-2 border-[#666666] bg-[#fafafa]" />
          <PanelRow
            className="h-[540px] shrink-0"
            edge="border-[#c8c8c8]"
            gutter
            bar={<ScrollBar thumb />}
            name={
              <div className="pl-[11px] text-[18px] whitespace-nowrap text-black">
                <div className="pt-[28px] tracking-[1.05px]">D_azur_sorted.bam Coverage</div>
                <div className="pt-[243px] tracking-[1px]">D_azur_sorted.bam</div>
              </div>
            }
          >
            <AlignmentChart />
          </PanelRow>
          <div className="h-[10px] shrink-0 border-y-2 border-[#666666] bg-[#fafafa]" />
          <div className="relative h-[84px] shrink-0">
            <PanelRow className="h-[84px]" edge="border-[#c8c8c8]" bar={
              <div className="flex h-[84px] flex-col overflow-hidden">
                <div className="flex h-[102px] shrink-0"><ScrollBar /></div>
              </div>
            } />
            <div className="absolute inset-x-0 bottom-0 h-[26px] bg-gradient-to-b from-transparent to-black/20" />
            <div className="absolute top-[6px] left-[472px] flex h-[72px] w-[84px] items-center justify-center border-2 border-[#d5d5d5] bg-[#fce99e] pt-0.5 font-['Open_Sans'] text-[25px] tracking-[0.8px] text-[#555] shadow-[0_1px_7px_rgba(0,0,0,0.55)]">IGV</div>
          </div>
        </div>
        <Taskbar />
      </div>
    </div>
  );
}
